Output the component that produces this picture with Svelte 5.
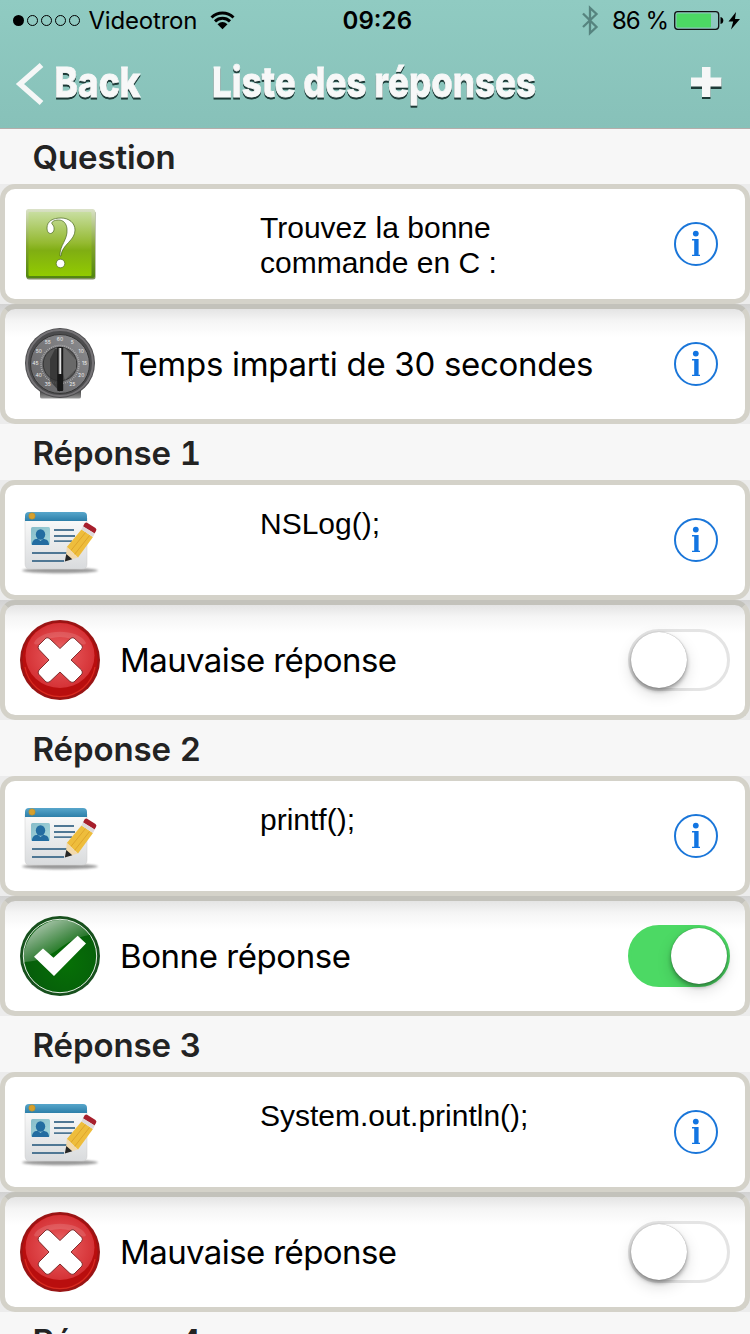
<script>
  const sections = [
    { title: 'Question', icon: 'question', text: 'Trouvez la bonne commande en C :', kind: 'timer', label: 'Temps imparti de 30 secondes' },
    { title: 'Réponse 1', icon: 'card', text: 'NSLog();', kind: 'bad', label: 'Mauvaise réponse' },
    { title: 'Réponse 2', icon: 'card', text: 'printf();', kind: 'good', label: 'Bonne réponse' },
    { title: 'Réponse 3', icon: 'card', text: 'System.out.println();', kind: 'bad', label: 'Mauvaise réponse' }
  ];
  const dialNumbers = ['60', '5', '10', '15', '20', '25', '', '35', '40', '45', '50', '55'];
  const dial = dialNumbers.map((n, i) => ({
    n,
    x: 40 + 24.5 * Math.sin((i * Math.PI) / 6),
    y: 41.5 - 24.5 * Math.cos((i * Math.PI) / 6)
  }));
</script>

{#snippet info()}
  <svg class="info" width="44" height="44" viewBox="0 0 44 44">
    <circle cx="22" cy="22" r="21" fill="none" stroke="#1a76d9" stroke-width="2" />
    <circle cx="21.8" cy="11.6" r="2.9" fill="#1275e2" />
    <path d="M18 17h6.600v15.800H26V34h-8v-1.200h2.200V18.400H18z" fill="#1275e2" />
  </svg>
{/snippet}

{#snippet icon(kind)}
  <svg class="icon" width="80" height="80" viewBox="0 0 80 80">
    {#if kind === 'question'}
      <rect x="6.5" y="6.5" width="69" height="69" rx="2.5" fill="#55692c" opacity=".75" />
      <rect x="6" y="5" width="69" height="69" rx="2.5" fill="url(#greenEdge)" />
      <rect x="8.5" y="8" width="63" height="64" rx="1" fill="url(#green)" />
      <path d="M27 24C27 17 33 14 41 14c8 0 14 5 14 12 0 11-13 14-14 26h-1c-.5-11 8-16 7-27-.5-6-4-9-8.500-9-4.500 0-7.500 2-6.500 4 3 2 3 9-1.500 9.500-2.500 0-3.500-2.500-3.500-5.500z" fill="#fff" stroke="#4b6722" stroke-width=".7" />
      <circle cx="40.500" cy="59.500" r="4.300" fill="#fff" stroke="#4b6722" stroke-width=".7" />
    {:else if kind === 'timer'}
      <path d="M20 66h41v7q0 1.500-2 1.500H22q-2 0-2-1.500z" fill="url(#base)" />
      <circle cx="40" cy="39" r="35" fill="#4c4c4e" />
      <circle cx="40" cy="39" r="33" fill="none" stroke="#757376" stroke-width="2" />
      <circle cx="40" cy="40" r="29.500" fill="url(#face)" stroke="#353535" />
      <circle cx="40" cy="40.500" r="19" fill="none" stroke="#bdbdbd" stroke-width="1.500" stroke-dasharray=".7 1.290" />
      <circle cx="40" cy="40" r="16.800" fill="#555" stroke="#343434" />
      <path d="M35 24h10l11 12v9L45 56z" fill="#696969" />
      <path d="M35 25l-5 10v22l10 11V24z" fill="#303030" opacity=".75" />
      <rect x="37.200" y="23" width="6" height="44" rx="1" fill="#181818" />
      <rect x="38.500" y="24" width="3" height="26" fill="#777" />
      <rect x="39.500" y="24" width="1.400" height="26" fill="#eee" />
      {#each dial as d}
        <text class="dial" x={d.x} y={d.y - 0.3} text-anchor="middle">{d.n}</text>
      {/each}
    {:else if kind === 'card'}
      <ellipse cx="40" cy="70.500" rx="38" ry="2.700" fill="#707070" opacity=".7" filter="url(#soft)" />
      <path d="M5 18h62v46q0 5-5 5H10q-5 0-5-5z" fill="url(#paper)" stroke="#ccc" stroke-width=".5" />
      <path d="M5 21v-5q0-4 4-4h54q4 0 4 4v5z" fill="url(#blue)" />
      <circle cx="12" cy="16" r="3.200" fill="#d6a02d" stroke="#af872e" stroke-width=".5" />
      <rect x="11" y="27" width="19" height="18" rx="1.500" fill="url(#photo)" />
      <ellipse cx="20.500" cy="34.500" rx="4.700" ry="5.200" fill="#236da1" />
      <path d="M12 45c0-5 3-6.500 6-6l2.500 2 2.500-2c4 0 6 2 6 6z" fill="#236da1" />
      <path d="M34 30h20M34 36h21M34 41.200h18M12 53h36M12 61h32" stroke="#4f7794" stroke-width="1.800" />
      <path d="M61.500 29.500L73 37 58 57.500 46.800 47z" fill="#eebd3c" />
      <path d="M65.500 32.500L50.500 51M69.500 35.500L54.500 54.500" stroke="#dfa52b" stroke-width="1" />
      <path d="M46.800 47l3.700 3 3.500 4 4 3.500L45.500 61z" fill="#f2d9ac" />
      <path d="M46.300 54l6 5.200-7.500 2.300z" fill="#252525" />
      <path d="M64.500 23.500q1.500-1.500 3-.6l8 5q1.600 1.400.5 3.200l-1.500 2.500L63 26.500z" fill="#a71f2c" />
      <path d="M63 26.300l11.700 7.200-1.700 3.500-11.500-7.500z" fill="#ded9da" />
    {:else if kind === 'bad'}
      <circle cx="40" cy="40" r="40" fill="#991515" />
      <circle cx="40" cy="40" r="37.600" fill="#b90e0e" />
      <path d="M5 47a35.500 35.500 0 0 0 70 0" fill="none" stroke="#d72c21" stroke-width="1.200" />
      <ellipse cx="40" cy="35.500" rx="34.500" ry="32.500" fill="url(#red)" />
      <path d="M14 23C21 8 59 8 66 23q-1 3-6 0c-12-8-28-8-40 0q-5 3-6 0z" fill="#fff" opacity=".13" />
      <path d="M26 18Q28 17 30 19L40 28.500 50 19q2-2 4-1l8 7.500q1 2-.5 4L51 40l10.500 10q1.500 2 .5 4L54 62q-2 1-4-.5L40 52 30 61.500q-2 1.500-4 .5L18.500 54q-1-2 .5-4L29 40 19 29.500q-1.500-2-.5-4z" fill="#fff" stroke="#762020" stroke-width=".9" />
    {:else}
      <circle cx="40" cy="40" r="40" fill="#17501d" />
      <circle cx="40" cy="40" r="36.700" fill="url(#check)" stroke="#e4efe4" stroke-width="1" />
      <path d="M4 46C2 22 21 4 40 4c14 0 24 6 30 15-30 4-34 26-66 27z" fill="url(#gloss)" />
      <path d="M14 40.700l9-8.200 10.500 9.200 24.200-22 8.300 7.800L34 60z" fill="#fff" />
    {/if}
  </svg>
{/snippet}

<svg class="defs" width="0" height="0">
  <defs>
    <linearGradient id="green" x1="0" y1="0" x2="0" y2="1"><stop stop-color="#c8dea0" /><stop offset=".48" stop-color="#95ba32" /><stop offset=".6" stop-color="#80ae13" /><stop offset="1" stop-color="#92cb00" /></linearGradient>
    <linearGradient id="greenEdge" x1="0" y1="0" x2="0" y2="1"><stop stop-color="#dbe2c9" /><stop offset=".55" stop-color="#80a32a" /><stop offset="1" stop-color="#52860f" /></linearGradient>
    <linearGradient id="base" x1="0" y1="0" x2="0" y2="1"><stop stop-color="#3b3b3b" /><stop offset="1" stop-color="#999" /></linearGradient>
    <linearGradient id="face" x1="0" y1="1" x2="1" y2="0"><stop stop-color="#636365" /><stop offset="1" stop-color="#8d8d90" /></linearGradient>
    <linearGradient id="paper" x1="0" y1="0" x2="0" y2="1"><stop stop-color="#fafafa" /><stop offset="1" stop-color="#d9dbdd" /></linearGradient>
    <linearGradient id="blue" x1="0" y1="0" x2="0" y2="1"><stop stop-color="#57a6cb" /><stop offset="1" stop-color="#2d7fa9" /></linearGradient>
    <linearGradient id="photo" x1="0" y1="0" x2="1" y2="1"><stop stop-color="#87bcc9" /><stop offset="1" stop-color="#a7d9dd" /></linearGradient>
    <radialGradient id="red"><stop stop-color="#ee7777" /><stop offset=".5" stop-color="#e04a4d" /><stop offset="1" stop-color="#d53236" /></radialGradient>
    <radialGradient id="check" cx=".6" cy=".6" r=".7"><stop stop-color="#067006" /><stop offset="1" stop-color="#06580c" /></radialGradient>
    <linearGradient id="gloss" x1=".1" y1=".1" x2=".65" y2=".75"><stop stop-color="#fff" stop-opacity=".7" /><stop offset="1" stop-color="#fff" stop-opacity=".06" /></linearGradient>
    <filter id="soft" x="-.2" y="-1" width="1.400" height="3"><feGaussianBlur stdDeviation="1" /></filter>
  </defs>
</svg>

<main>
  <header>
    <svg width="750" height="128" viewBox="0 0 750 128">
      <circle cx="18.500" cy="20.500" r="5.500" />
      {#each [32.5, 46.5, 60.5, 74.5] as x}
        <circle cx={x} cy="20.500" r="5" fill="none" stroke="#000" stroke-width="1" />
      {/each}
      <text class="status" x="88.500" y="29" textLength="109">Videotron</text>
      <path d="M211.500 17.500a16 16 0 0 1 22 0M215 21.300a11 11 0 0 1 15 0" fill="none" stroke="#000" stroke-width="3" />
      <path d="M217.500 24.200q5-4.200 10 0l-5 5z" stroke="none" />
      <text class="status time" x="342.500" y="29" textLength="69.500">09:26</text>
      <path d="M583 13.500l13.500 13.500-6.500 6V8l6.500 6L583 27" fill="none" stroke="#56847f" stroke-width="2.300" />
      <text class="status" x="612" y="29" textLength="57">86 %</text>
      <rect x="674.700" y="11.700" width="44" height="17.600" rx="3" fill="none" stroke="#111" stroke-width="1.300" />
      <rect x="676.500" y="13.500" width="34.500" height="14" rx="1" fill="#4cd964" />
      <path d="M720.500 17v7q2.800-.5 2.800-3.500t-2.800-3.500z" />
      <path d="M736 12l-7.500 9.500h4.700L731 29.500l9-10.500h-5z" />
      <path d="M41.500 65L20 84l21.500 19" fill="none" stroke="#f5f7f7" stroke-width="5.500" />
      <g class="heading">
        <text x="54.500" y="96.500" textLength="86" lengthAdjust="spacingAndGlyphs">Back</text>
        <text x="212" y="96.500" textLength="324" lengthAdjust="spacingAndGlyphs">Liste des réponses</text>
      </g>
      <path d="M691 78.500v10.500h11v10h8.500V89h11V78.500z" fill="#1d3936" />
      <path d="M702 67h8.500v10.500h11v9h-11v10.500H702V86.500h-11v-9h11z" fill="#f6f7f7" />
    </svg>
  </header>

  {#each sections as s}
    <section>
      <h2>{s.title}</h2>
      <div class="row">
        <div class="card">
          {@render icon(s.icon)}
          <p class="answer">{s.text}</p>
          {@render info()}
        </div>
      </div>
      <div class="row lower">
        <div class="card">
          {@render icon(s.kind)}
          <p class={['label', s.kind]}>{s.label}</p>
          {#if s.kind === 'timer'}
            {@render info()}
          {:else}
            <span class={['toggle', s.kind === 'good' && 'on']}><i></i></span>
          {/if}
        </div>
      </div>
    </section>
  {/each}
  <h2>Réponse 4</h2>
</main>

<style>
  :global(body) { margin: 0; overflow: hidden; }
  .defs { display: block; }
  main {
    width: 750px;
    height: 1334px;
    overflow: hidden;
    background: #f7f7f7;
    font-family: Inter, 'Noto Sans', sans-serif;
    color: #000;
  }
  header {
    position: relative;
    height: 128px;
    background: linear-gradient(#90cbc2, #87c1b9);
    box-shadow: 0 1px #b5adab;
  }
  header svg { display: block; }
  .status { font-size: 24px; }
  .time { font-weight: 600; }
  .heading text {
    font-family: Inter, 'Liberation Sans', sans-serif;
    font-weight: 800;
    font-size: 41.5px;
    fill: #f7f8f8;
    stroke: #f7f8f8;
    stroke-width: 0.8px;
    filter: drop-shadow(0 2px 0 #1d3936);
  }
  h2 {
    margin: 0;
    height: 56px;
    padding: 1px 0 0 32.5px;
    box-sizing: border-box;
    font-size: 33px;
    line-height: 56px;
    font-weight: 600;
    font-feature-settings: 'tnum';
    letter-spacing: -0.1px;
    color: #232323;
  }
  .row { height: 120px; background: #ececec; }
  .card {
    height: 120px;
    box-sizing: border-box;
    border: 5px solid #d4d2c9;
    border-radius: 15px;
    background: #fff;
    display: flex;
    align-items: center;
    padding: 0 15px;
  }
  .lower { background: linear-gradient(#d2d2d2, #ececec 28px); }
  .lower .card {
    border-top-color: #c3c2bb;
    background: linear-gradient(#e4e4e4, #f5f5f5 12px, #fff 28px) padding-box;
  }
  .icon { flex: none; }
  .dial { font-size: 5px; fill: #eee; }
  p { margin: 0; white-space: nowrap; }
  .answer {
    flex: none;
    align-self: flex-start;
    width: 300px;
    margin: 21px 0 0 160px;
    white-space: normal;
    font-family: 'Liberation Sans', Arial, sans-serif;
    font-size: 30px;
    line-height: 35px;
  }
  .label { margin-left: 20px; font-size: 33px; letter-spacing: -0.3px; }
  .label.bad { letter-spacing: -0.6px; }
  .label.good { letter-spacing: -0.43px; }
  .info { margin: 0 12px 0 auto; flex: none; }
  .toggle {
    width: 102px;
    height: 62px;
    margin-left: auto;
    flex: none;
    box-sizing: border-box;
    border: 3px solid #e4e4e4;
    border-radius: 31px;
    display: flex;
    align-items: center;
  }
  .toggle i {
    width: 56px;
    height: 56px;
    border-radius: 50%;
    background: #fff;
    box-shadow: 0 0 1px rgb(0 0 0 / 0.4), 0 3px 4px rgb(0 0 0 / 0.32), 0 6px 15px rgb(0 0 0 / 0.15);
  }
  .toggle.on { background: #4cd964; border-color: #4cd964; justify-content: flex-end; }
</style>
